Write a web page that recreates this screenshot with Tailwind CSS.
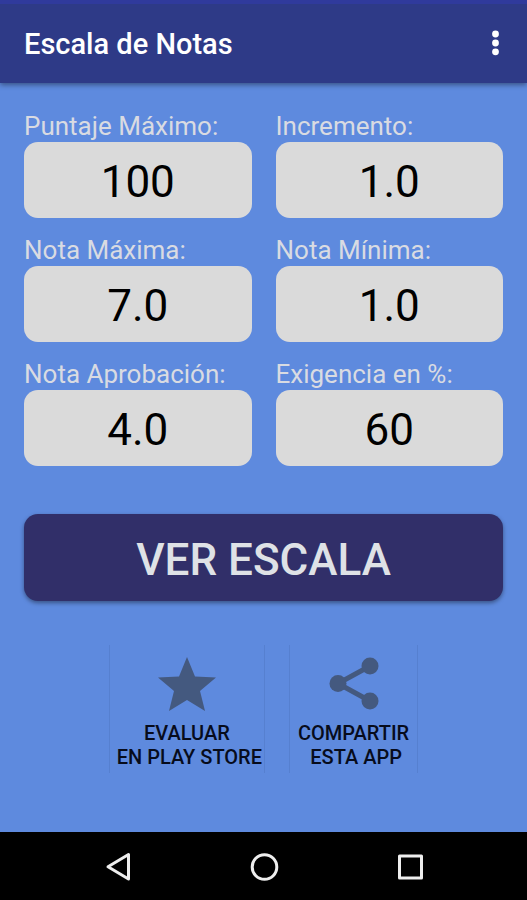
<!DOCTYPE html>
<html lang="es">
<head>
  <meta charset="UTF-8">
  <meta name="viewport" content="width=device-width, initial-scale=1">
  <title>Escala de Notas</title>
  <script src="https://cdn.jsdelivr.net/npm/@tailwindcss/browser@4"></script>
</head>
<body class="min-h-screen flex flex-col bg-[#5e8ade] font-['Roboto',sans-serif]">
  <!-- App bar -->
  <header class="flex items-center justify-between h-[83px] pl-6 pr-4 border-t-4 border-[#303a9c] bg-[#2e3a87] shadow-[0_2px_5px_rgba(0,0,0,0.4)]">
    <h1 class="text-[29px] leading-8 font-medium text-white">Escala de Notas</h1>
    <button type="button" aria-label="Más opciones" class="w-8 h-12 flex items-center justify-center">
      <svg class="w-8 h-8" viewBox="0 0 32 32" fill="#fff">
        <circle cx="16.500" cy="6" r="3.400"/>
        <circle cx="16.500" cy="15" r="3.400"/>
        <circle cx="16.500" cy="23.800" r="3.400"/>
      </svg>
    </button>
  </header>

  <main class="grow px-6 pt-[27px]">
    <form id="scaleForm">
      <!-- Scale settings -->
      <div class="grid grid-cols-2 gap-x-6 gap-y-4">
        <div>
          <label for="maxScore" class="block text-[26px] leading-8 text-[#d9dbe2]">Puntaje Máximo:</label>
          <input type="text" inputmode="decimal" id="maxScore" value="100" class="block w-full h-[76px] pt-1 rounded-[14px] bg-[#dadada] text-center text-[44px] text-black">
        </div>
        <div>
          <label for="step" class="block text-[26px] leading-8 text-[#d9dbe2]">Incremento:</label>
          <input type="text" inputmode="decimal" id="step" value="1.0" class="block w-full h-[76px] pt-1 rounded-[14px] bg-[#dadada] text-center text-[44px] text-black">
        </div>
        <div>
          <label for="maxGrade" class="block text-[26px] leading-8 text-[#d9dbe2]">Nota Máxima:</label>
          <input type="text" inputmode="decimal" id="maxGrade" value="7.0" class="block w-full h-[76px] pt-1 rounded-[14px] bg-[#dadada] text-center text-[44px] text-black">
        </div>
        <div>
          <label for="minGrade" class="block text-[26px] leading-8 text-[#d9dbe2]">Nota Mínima:</label>
          <input type="text" inputmode="decimal" id="minGrade" value="1.0" class="block w-full h-[76px] pt-1 rounded-[14px] bg-[#dadada] text-center text-[44px] text-black">
        </div>
        <div>
          <label for="passGrade" class="block text-[26px] leading-8 text-[#d9dbe2]">Nota Aprobación:</label>
          <input type="text" inputmode="decimal" id="passGrade" value="4.0" class="block w-full h-[76px] pt-1 rounded-[14px] bg-[#dadada] text-center text-[44px] text-black">
        </div>
        <div>
          <label for="demand" class="block text-[26px] leading-8 text-[#d9dbe2]">Exigencia en %:</label>
          <input type="text" inputmode="decimal" id="demand" value="60" class="block w-full h-[76px] pt-1 rounded-[14px] bg-[#dadada] text-center text-[44px] text-black">
        </div>
      </div>

      <button type="submit" class="mt-12 w-full h-[87px] pt-1 rounded-[14px] bg-[#312f69] shadow-[0_2px_4px_rgba(0,0,0,0.4)] text-[44px] font-medium text-[#dfe2e6]">VER ESCALA</button>
    </form>

    <!-- Rate and share -->
    <div class="mt-11 flex justify-center gap-6">
      <button type="button" class="flex flex-col items-center pt-3 pb-1 px-0.5 border-x border-[#5680d0] text-xl leading-6 font-medium text-[#070c1c]">
        <svg class="w-[58px] h-[54px] mb-[10px]" viewBox="0 0 58 54" fill="#44597f">
          <path d="M29 0L37 19.500L58 20.500L42 34L47 54L29 43L11 54L16 34L0 20.500L21 19.500Z"/>
        </svg>
        <span>EVALUAR<br>&nbsp;EN PLAY STORE</span>
      </button>
      <button type="button" class="flex flex-col items-center pt-3 pb-1 px-2 border-x border-[#5680d0] text-xl leading-6 font-medium text-[#070c1c]">
        <svg class="w-[50px] h-[54px] mb-[10px]" viewBox="0 0 50 54" fill="#44597f">
          <path d="M41 9L9 26.500L41 44" fill="none" stroke="#44597f" stroke-width="5"/>
          <circle cx="41" cy="9" r="8.500"/>
          <circle cx="9" cy="26.500" r="8.500"/>
          <circle cx="41" cy="44" r="8.500"/>
        </svg>
        <span>COMPARTIR<br>&nbsp;ESTA APP</span>
      </button>
    </div>
  </main>

  <!-- System navigation -->
  <nav class="flex items-center justify-center gap-[106px] h-[68px] bg-black">
    <button type="button" aria-label="Atrás" class="w-10 h-10">
      <svg class="w-10 h-10" viewBox="0 0 40 40" fill="none" stroke="#eee" stroke-width="3" stroke-linejoin="round">
        <path d="M30.500 8.500V33L10 20.800Z"/>
      </svg>
    </button>
    <button type="button" aria-label="Inicio" class="w-10 h-10">
      <svg class="w-10 h-10" viewBox="0 0 40 40" fill="none" stroke="#eee" stroke-width="3">
        <circle cx="20.500" cy="21" r="12.300"/>
      </svg>
    </button>
    <button type="button" aria-label="Recientes" class="w-10 h-10">
      <svg class="w-10 h-10" viewBox="0 0 40 40" fill="none" stroke="#eee" stroke-width="3" stroke-linejoin="round">
        <rect x="9.500" y="10" width="22" height="22"/>
      </svg>
    </button>
  </nav>

  <script>
    document.getElementById('scaleForm').addEventListener('submit', function(event) {
      event.preventDefault();
    });
  </script>
</body>
</html>
